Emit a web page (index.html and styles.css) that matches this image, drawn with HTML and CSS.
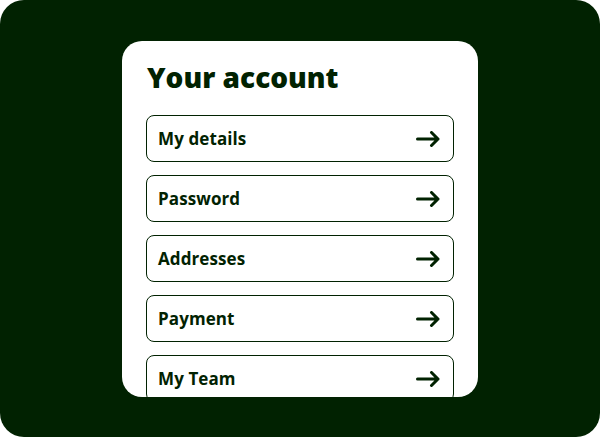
FILE: index.html
```html
<!DOCTYPE html>
<html>
<head>
<meta charset="utf-8">
<link rel="stylesheet" href="styles.css">
</head>
<body>
<div class="frame">
  <div class="card">
    <h1 class="title">Your account</h1>
    <ul class="menu">
      <li class="item"><span class="label">My details</span><svg class="arrow" viewBox="0 0 24 16" width="24" height="16"><path d="M1.5 8H22M15.5 1.5L22 8L15.5 14.5" fill="none" stroke="currentColor" stroke-width="3" stroke-linecap="round" stroke-linejoin="round"/></svg></li>
      <li class="item"><span class="label">Password</span><svg class="arrow" viewBox="0 0 24 16" width="24" height="16"><path d="M1.5 8H22M15.5 1.5L22 8L15.5 14.5" fill="none" stroke="currentColor" stroke-width="3" stroke-linecap="round" stroke-linejoin="round"/></svg></li>
      <li class="item"><span class="label">Addresses</span><svg class="arrow" viewBox="0 0 24 16" width="24" height="16"><path d="M1.5 8H22M15.5 1.5L22 8L15.5 14.5" fill="none" stroke="currentColor" stroke-width="3" stroke-linecap="round" stroke-linejoin="round"/></svg></li>
      <li class="item"><span class="label">Payment</span><svg class="arrow" viewBox="0 0 24 16" width="24" height="16"><path d="M1.5 8H22M15.5 1.5L22 8L15.5 14.5" fill="none" stroke="currentColor" stroke-width="3" stroke-linecap="round" stroke-linejoin="round"/></svg></li>
      <li class="item"><span class="label">My Team</span><svg class="arrow" viewBox="0 0 24 16" width="24" height="16"><path d="M1.5 8H22M15.5 1.5L22 8L15.5 14.5" fill="none" stroke="currentColor" stroke-width="3" stroke-linecap="round" stroke-linejoin="round"/></svg></li>
    </ul>
  </div>
</div>
</body>
</html>
```
FILE: styles.css
```css
html, body {
  margin: 0;
  padding: 0;
  background: #ffffff;
}
body {
  font-family: "Open Sans", "DejaVu Sans", sans-serif;
  color: #012201;
}
.frame {
  width: 600px;
  height: 437px;
  box-sizing: border-box;
  background: #012201;
  border-radius: 24px;
  display: flex;
  justify-content: center;
  padding-top: 41px;
}
.card {
  width: 356px;
  height: 356px;
  box-sizing: border-box;
  background: #ffffff;
  border-radius: 20px;
  padding: 19px 24px 0 24px;
  overflow: hidden;
}
.title {
  margin: 0 0 20px 1px;
  font-size: 28px;
  line-height: 35px;
  font-weight: 800;
  letter-spacing: 0;
}
.menu {
  list-style: none;
  margin: 0;
  padding: 0;
  display: flex;
  flex-direction: column;
  gap: 13px;
}
.item {
  height: 47px;
  box-sizing: border-box;
  border: 1px solid #012201;
  border-radius: 8px;
  display: flex;
  align-items: center;
  justify-content: space-between;
  padding: 0 13px 0 11px;
  flex-shrink: 0;
}
.label {
  font-size: 17px;
  font-weight: 700;
  letter-spacing: 0.1px;
}
.arrow {
  display: block;
  color: #012201;
}
```
